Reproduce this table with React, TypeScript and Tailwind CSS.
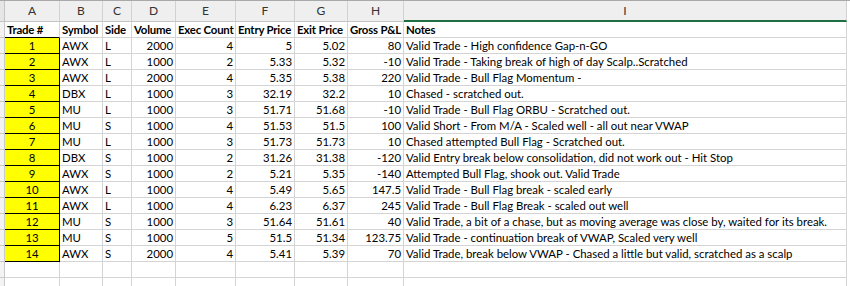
import React from "react";

type Trade = [number, string, string, number, number, string, string, string, string];

const trades: Trade[] = [
  [1, "AWX", "L", 2000, 4, "5", "5.02", "80", "Valid Trade - High confidence Gap-n-GO"],
  [2, "AWX", "L", 1000, 2, "5.33", "5.32", "-10", "Valid Trade - Taking break of high of day Scalp..Scratched"],
  [3, "AWX", "L", 2000, 4, "5.35", "5.38", "220", "Valid Trade - Bull Flag Momentum -"],
  [4, "DBX", "L", 1000, 3, "32.19", "32.2", "10", "Chased - scratched out."],
  [5, "MU", "L", 1000, 3, "51.71", "51.68", "-10", "Valid Trade - Bull Flag ORBU - Scratched out."],
  [6, "MU", "S", 1000, 4, "51.53", "51.5", "100", "Valid Short - From M/A - Scaled well - all out near VWAP"],
  [7, "MU", "L", 1000, 3, "51.73", "51.73", "10", "Chased attempted Bull Flag - Scratched out."],
  [8, "DBX", "S", 1000, 2, "31.26", "31.38", "-120", "Valid Entry break below consolidation, did not work out - Hit Stop"],
  [9, "AWX", "S", 1000, 2, "5.21", "5.35", "-140", "Attempted Bull Flag, shook out. Valid Trade"],
  [10, "AWX", "L", 1000, 4, "5.49", "5.65", "147.5", "Valid Trade - Bull Flag break - scaled early"],
  [11, "AWX", "L", 1000, 4, "6.23", "6.37", "245", "Valid Trade - Bull Flag Break - scaled out well"],
  [12, "MU", "S", 1000, 3, "51.64", "51.61", "40", "Valid Trade, a bit of a chase, but as moving average was close by, waited for its break."],
  [13, "MU", "S", 1000, 5, "51.5", "51.34", "123.75", "Valid Trade - continuation break of VWAP, Scaled very well"],
  [14, "AWX", "S", 2000, 4, "5.41", "5.39", "70", "Valid Trade, break below VWAP - Chased a little but valid, scratched as a scalp"],
];

const letters = ["A", "B", "C", "D", "E", "F", "G", "H", "I"];
const titles = ["Trade #", "Symbol", "Side", "Volume", "Exec Count", "Entry Price", "Exit Price", "Gross P&L", "Notes"];

const grid = "grid grid-cols-[5px_55px_43px_29px_44px_60px_59px_53px_56px_443px]";
const cell = "h-[16px] border-r border-b border-[#d4d4d4] px-[2px] leading-[15px] whitespace-nowrap overflow-hidden";
const stub = "h-[16px] bg-[#f3f3f3] border-r border-b border-[#c9c9c9]";

function Row({ values }: { values: (string | number)[] }) {
  return (
    <>
      <div className={stub} />
      <div className={`${cell} text-center bg-[#ffff00] border-r-black border-b-black`}>{values[0]}</div>
      <div className={cell}>{values[1]}</div>
      <div className={cell}>{values[2]}</div>
      <div className={`${cell} text-right`}>{values[3]}</div>
      <div className={`${cell} text-right`}>{values[4]}</div>
      <div className={`${cell} text-right`}>{values[5]}</div>
      <div className={`${cell} text-right`}>{values[6]}</div>
      <div className={`${cell} text-right`}>{values[7]}</div>
      <div className={cell}>{values[8]}</div>
    </>
  );
}

export default function App() {
  return (
    <div className="w-[850px] h-[286px] overflow-hidden bg-white font-['Lato',sans-serif] text-[11.4px] text-black">
      <div className={`${grid} border-t border-[#a9a9a9]`}>
        {/* column letters */}
        <div className="h-[21px] bg-[#e6e6e6] border-r border-b border-[#c4c4c4]" />
        {letters.map((l) => (
          <div
            key={l}
            className={`h-[21px] bg-[#efefef] border-r border-[#d2d2d2] flex items-center justify-center text-[12px] text-[#333] ${
              l === "I" ? "border-b-2 border-b-[#1f6f43]" : "border-b border-b-[#c4c4c4]"
            }`}
          >
            {l}
          </div>
        ))}

        {/* titles */}
        <div className={stub} />
        {titles.map((t, i) => (
          <div key={t} className={`${cell} font-bold tracking-[-0.2px] ${i === 0 ? "border-b-black" : ""}`}>
            {t}
          </div>
        ))}

        {trades.map((t) => (
          <Row key={t[0]} values={t} />
        ))}

        {[0, 1].map((r) => (
          <React.Fragment key={r}>
            <div className={stub} />
            {letters.map((l) => (
              <div key={l} className={cell} />
            ))}
          </React.Fragment>
        ))}
      </div>
    </div>
  );
}
